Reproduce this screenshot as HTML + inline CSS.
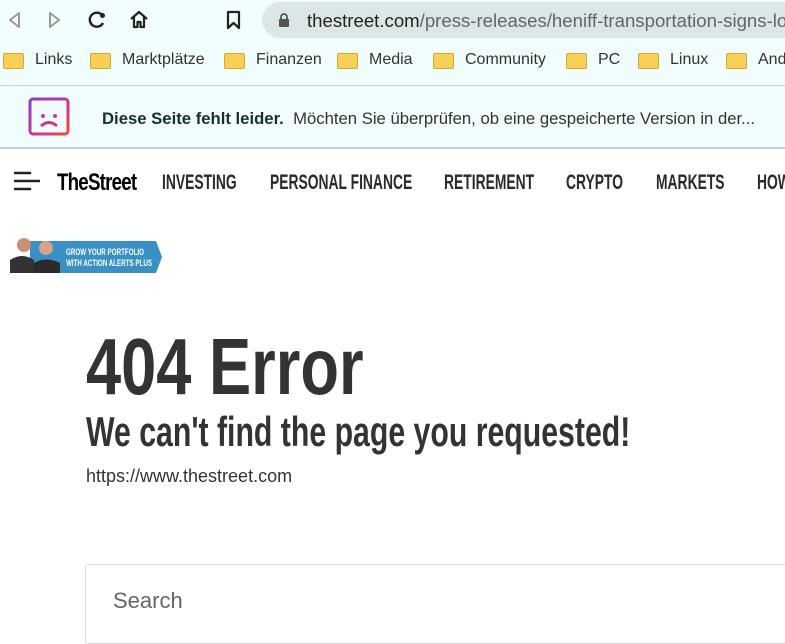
<!DOCTYPE html>
<html><head><meta charset="utf-8"><style>
*{margin:0;padding:0;box-sizing:border-box}
body{width:785px;height:631px;overflow:hidden;background:#fff;font-family:"Liberation Sans",sans-serif;position:relative}
.chrome{position:absolute;left:0;top:0;width:785px;height:148px;background:#f1fcfc}
.url{position:absolute;left:262px;top:2px;width:540px;height:36px;background:#dde6e6;border-radius:18px}
.url span{position:absolute;left:45px;top:8px;font-size:18.6px;color:#222;white-space:nowrap}
.url span i{font-style:normal;color:#5f6868}
.bm{position:absolute;top:51px;font-size:16px;color:#333;white-space:nowrap}
.fold{position:absolute;top:53px;width:21px;height:16px;background:#f7cf57;border:1px solid #d9a92e;border-radius:2px}
.sep{position:absolute;left:0;top:85px;width:785px;height:1px;background:#c9d2d2}
.bar{position:absolute;left:0;top:147px;width:785px;height:2px;background:#c8cccc}
.msg{position:absolute;left:102px;top:109px;font-size:16.7px;color:#333;white-space:nowrap}
.msg b{color:#173030}
.cond{font-family:"Liberation Sans",sans-serif;font-weight:bold;transform-origin:0 0;white-space:nowrap;position:absolute}
.nav{top:171px;font-size:21px;color:#2a2a2a;transform:scaleX(.66)}
</style></head><body>
<div class="chrome">
<svg style="position:absolute;left:6px;top:10px" width="18" height="20"><path d="M13 3L4 10L13 17Z" fill="none" stroke="#999" stroke-width="2" stroke-linejoin="round"/></svg>
<svg style="position:absolute;left:46px;top:10px" width="18" height="20"><path d="M4 3L13 10L4 17Z" fill="none" stroke="#999" stroke-width="2" stroke-linejoin="round"/></svg>
<svg style="position:absolute;left:86px;top:9px" width="22" height="22"><path d="M16 6A7 7 0 1 0 17 14" fill="none" stroke="#222" stroke-width="2.4"/><circle cx="16.5" cy="6.5" r="2.5" fill="#222"/></svg>
<svg style="position:absolute;left:128px;top:9px" width="22" height="22"><path d="M3 10L11 3L19 10M6 8V18H9.5V13H12.5V18H16V8" fill="none" stroke="#222" stroke-width="2.2" stroke-linejoin="round"/></svg>
<svg style="position:absolute;left:224px;top:9px" width="20" height="22"><path d="M4 3H15V19L9.5 14L4 19Z" fill="none" stroke="#222" stroke-width="2.2" stroke-linejoin="round"/></svg>
<div class="url"><svg style="position:absolute;left:16px;top:11px" width="12" height="14"><rect x="1" y="6" width="10" height="8" rx="1" fill="#555"/><path d="M3 6V4a3 3 0 0 1 6 0V6" fill="none" stroke="#555" stroke-width="1.8"/></svg><span>thestreet.com<i>/press-releases/heniff-transportation-signs-loi</i></span></div>
<div class="fold" style="left:3px"></div><div class="bm" style="left:35px">Links</div>
<div class="fold" style="left:90px"></div><div class="bm" style="left:122px">Marktplätze</div>
<div class="fold" style="left:224px"></div><div class="bm" style="left:256px">Finanzen</div>
<div class="fold" style="left:337px"></div><div class="bm" style="left:369px">Media</div>
<div class="fold" style="left:433px"></div><div class="bm" style="left:465px">Community</div>
<div class="fold" style="left:566px"></div><div class="bm" style="left:598px">PC</div>
<div class="fold" style="left:638px"></div><div class="bm" style="left:670px">Linux</div>
<div class="fold" style="left:726px"></div><div class="bm" style="left:758px">Andr</div>
<div class="sep"></div>
<svg style="position:absolute;left:28px;top:97px" width="44" height="40"><defs><linearGradient id="g" x1="0" y1="0" x2="1" y2="1"><stop offset="0" stop-color="#8a3fd1"/><stop offset=".6" stop-color="#d1368f"/><stop offset="1" stop-color="#f04a3a"/></linearGradient></defs><rect x="2" y="2" width="38" height="35" rx="3" fill="none" stroke="url(#g)" stroke-width="3"/><line x1="2" y1="10" x2="40" y2="10" stroke="url(#g)" stroke-width="3"/><circle cx="15" cy="19" r="2" fill="#c93a9a"/><circle cx="27" cy="19" r="2" fill="#c93a9a"/><path d="M13 29Q21 22 29 29" fill="none" stroke="#d1368f" stroke-width="3"/></svg>
<div class="msg"><b>Diese Seite fehlt leider.</b>&nbsp; Möchten Sie überprüfen, ob eine gespeicherte Version in der...</div>
</div>
<div class="bar"></div>
<svg style="position:absolute;left:14px;top:171px" width="26" height="20"><path d="M1 2H16M1 10H25M1 18H16" stroke="#222" stroke-width="2.6" stroke-linecap="round"/></svg>
<div class="cond" style="left:57px;top:169px;font-size:24px;color:#000;transform:scaleX(.78);letter-spacing:-1px">TheStreet</div>
<div class="cond nav" style="left:162px">INVESTING</div>
<div class="cond nav" style="left:270px">PERSONAL FINANCE</div>
<div class="cond nav" style="left:444px">RETIREMENT</div>
<div class="cond nav" style="left:566px">CRYPTO</div>
<div class="cond nav" style="left:656px">MARKETS</div>
<div class="cond nav" style="left:757px">HOW</div>
<svg style="position:absolute;left:10px;top:232px" width="152" height="42"><path d="M20 9H146L152 25L146 41H20Z" fill="#3990c5"/><circle cx="14" cy="13" r="7" fill="#c98f77"/><path d="M0 41V28Q12 20 24 28V41Z" fill="#333"/><circle cx="36" cy="16" r="7" fill="#d6a38a"/><path d="M24 41V31Q36 24 50 31V41Z" fill="#2b2b2b"/><text x="56" y="23" font-family="Liberation Sans" font-weight="bold" font-size="9" fill="#fff" textLength="78" lengthAdjust="spacingAndGlyphs">GROW YOUR PORTFOLIO</text><text x="56" y="34" font-family="Liberation Sans" font-weight="bold" font-size="9" fill="#fff" textLength="86" lengthAdjust="spacingAndGlyphs">WITH ACTION ALERTS PLUS</text></svg>
<div class="cond" style="left:86px;top:321px;font-size:80px;color:#333;transform:scaleX(.79)">404 Error</div>
<div class="cond" style="left:86px;top:408px;font-size:42px;color:#333;transform:scaleX(.72)">We can't find the page you requested!</div>
<div style="position:absolute;left:86px;top:466px;font-size:18px;color:#333">https://www.thestreet.com</div>
<div style="position:absolute;left:85px;top:564px;width:720px;height:80px;border:1px solid #ddd;border-radius:3px"></div>
<div style="position:absolute;left:113px;top:588px;font-size:22px;color:#666">Search</div>
</body></html>
